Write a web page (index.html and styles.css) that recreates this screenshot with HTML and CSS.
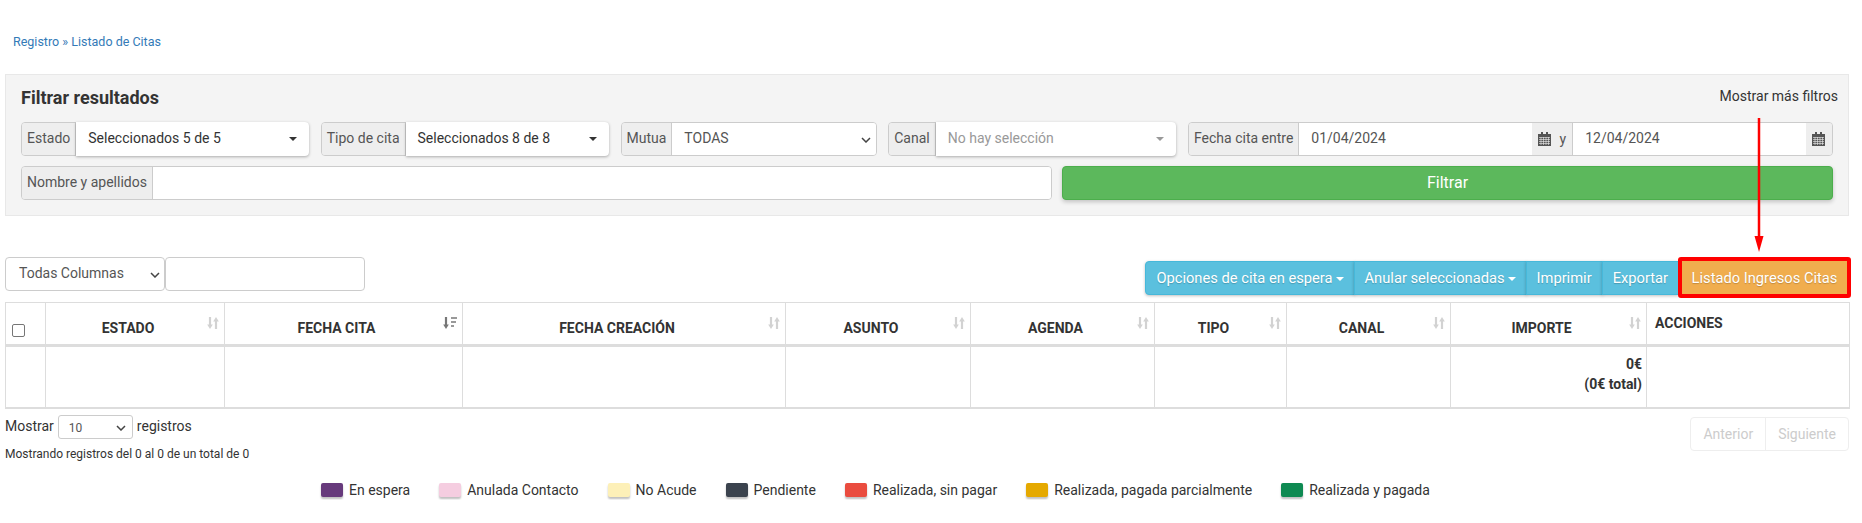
FILE: index.html
```html
<!DOCTYPE html>
<html lang="es">
<head>
    <meta charset="UTF-8">
    <title>Listado de Citas</title>
    <link rel="stylesheet" href="styles.css">
</head>
<body>
    <svg class="defs" width="0" height="0">
        <symbol id="sort-icon" viewBox="0 0 12 14">
            <path d="M3 1v8" stroke="currentColor" stroke-width="2.200"/>
            <path d="M.2 8.500h5.600L3 13z" fill="currentColor"/>
            <path d="M9 13V5" stroke="currentColor" stroke-width="2.200"/>
            <path d="M6.200 5.500h5.600L9 1z" fill="currentColor"/>
        </symbol>
        <symbol id="cal-icon" viewBox="0 0 13 14">
            <path d="M0 2h13v12H0z" fill="#555"/>
            <path d="M3 0h2v3H3zM8 0h2v3H8z" fill="#555"/>
            <path d="M1 5.500h11M1 7.500h11M1 9.500h11M1 11.500h11M3 5v8M5.500 5v8M8 5v8M10.500 5v8" stroke="#eee" stroke-width=".6" fill="none"/>
        </symbol>
        <symbol id="chevron-icon" viewBox="0 0 10 6">
            <path d="M1 1l4 4 4-4" fill="none" stroke="#444" stroke-width="1.500"/>
        </symbol>
    </svg>

    <div class="breadcrumb"><a>Registro</a> » <a>Listado de Citas</a></div>

    <section class="filter-panel">
        <div class="filter-head">
            <h3>Filtrar resultados</h3>
            <a class="more-filters">Mostrar más filtros</a>
        </div>
        <div class="filter-row">
            <div class="group w-estado">
                <span class="addon">Estado</span>
                <div class="fake-select raised">Seleccionados 5 de 5<i class="caret"></i></div>
            </div>
            <div class="group w-tipo">
                <span class="addon">Tipo de cita</span>
                <div class="fake-select raised">Seleccionados 8 de 8<i class="caret"></i></div>
            </div>
            <div class="group w-mutua">
                <span class="addon">Mutua</span>
                <div class="fake-select">TODAS
                    <svg class="chevron"><use href="#chevron-icon"/></svg>
                </div>
            </div>
            <div class="group w-canal">
                <span class="addon">Canal</span>
                <div class="fake-select raised muted">No hay selección<i class="caret"></i></div>
            </div>
            <div class="group w-fecha">
                <span class="addon">Fecha cita entre</span>
                <div class="fake-input">01/04/2024</div>
                <span class="addon addon-cal">
                    <svg class="cal"><use href="#cal-icon"/></svg>
                    <span>y</span>
                </span>
                <div class="fake-input">12/04/2024</div>
                <span class="addon addon-last">
                    <svg class="cal"><use href="#cal-icon"/></svg>
                </span>
            </div>
        </div>
        <div class="filter-row">
            <div class="group w-nombre">
                <span class="addon">Nombre y apellidos</span>
                <div class="fake-input square"></div>
            </div>
            <button class="btn-filtrar">Filtrar</button>
        </div>
    </section>

    <div class="toolbar">
        <div class="search">
            <div class="search-select">Todas Columnas
                <svg class="chevron"><use href="#chevron-icon"/></svg>
            </div>
            <div class="search-input"></div>
        </div>
        <div class="actions">
            <button class="btn-info first">Opciones de cita en espera<i class="caret white"></i></button>
            <button class="btn-info">Anular seleccionadas<i class="caret white"></i></button>
            <button class="btn-info">Imprimir</button>
            <button class="btn-info">Exportar</button>
            <button class="btn-warning">Listado Ingresos Citas</button>
        </div>
    </div>

    <table class="citas">
        <colgroup>
            <col class="c-check"><col class="c-estado"><col class="c-cita"><col class="c-creacion"><col class="c-asunto">
            <col class="c-agenda"><col class="c-tipo"><col class="c-canal"><col class="c-importe"><col class="c-acciones">
        </colgroup>
        <thead>
            <tr>
                <th class="check-cell"><span class="checkbox"></span></th>
                <th>ESTADO<svg class="sort"><use href="#sort-icon"/></svg></th>
                <th>FECHA CITA<svg class="sort-active" viewBox="0 0 14 14"><path d="M3 1v8" stroke="#777" stroke-width="2.200"/><path d="M.2 8.500h5.600L3 13z" fill="#777"/><path d="M8 1h6v2H8zM8 5h5v2H8zM8 9h3v2H8z" fill="#999"/></svg></th>
                <th>FECHA CREACIÓN<svg class="sort"><use href="#sort-icon"/></svg></th>
                <th>ASUNTO<svg class="sort"><use href="#sort-icon"/></svg></th>
                <th>AGENDA<svg class="sort"><use href="#sort-icon"/></svg></th>
                <th>TIPO<svg class="sort"><use href="#sort-icon"/></svg></th>
                <th>CANAL<svg class="sort"><use href="#sort-icon"/></svg></th>
                <th>IMPORTE<svg class="sort"><use href="#sort-icon"/></svg></th>
                <th class="th-acciones">ACCIONES</th>
            </tr>
        </thead>
        <tbody>
            <tr>
                <td></td><td></td><td></td><td></td><td></td><td></td><td></td><td></td>
                <td class="importe">0€<br>(0€ total)</td>
                <td></td>
            </tr>
        </tbody>
    </table>

    <div class="table-foot">
        <div class="foot-info">
            <div class="length">Mostrar
                <div class="length-select">10
                    <svg class="chevron"><use href="#chevron-icon"/></svg>
                </div>
                registros
            </div>
            <div class="count">Mostrando registros del 0 al 0 de un total de 0</div>
        </div>
        <div class="pager"><span>Anterior</span><span>Siguiente</span></div>
    </div>

    <ul class="legend">
        <li><i class="swatch s-espera"></i>En espera</li>
        <li><i class="swatch s-anulada"></i>Anulada Contacto</li>
        <li><i class="swatch s-noacude"></i>No Acude</li>
        <li><i class="swatch s-pendiente"></i>Pendiente</li>
        <li><i class="swatch s-sinpagar"></i>Realizada, sin pagar</li>
        <li><i class="swatch s-parcial"></i>Realizada, pagada parcialmente</li>
        <li><i class="swatch s-pagada"></i>Realizada y pagada</li>
    </ul>

    <!-- anotacion roja sobre la captura -->
    <svg class="annotation" viewBox="0 0 12 134">
        <path d="M6 0v120" stroke="#f00" stroke-width="2.500"/>
        <path d="M1.500 118h9L6 134z" fill="#f00"/>
    </svg>
</body>
</html>
```

FILE: styles.css
```css
* {
    margin: 0;
    padding: 0;
    box-sizing: border-box;
}

body {
    position: relative;
    background: #fff;
    color: #333;
    font-family: Roboto, 'Liberation Sans', sans-serif;
    font-size: 14px;
    line-height: 20px;
    padding: 0 13px 0 5px;
}

.defs {
    position: absolute;
}

.breadcrumb {
    height: 74px;
    padding: 32px 0 0 8px;
    font-size: 12.500px;
    color: #337ab7;
}

/* panel de filtros */
.filter-panel {
    height: 142px;
    background: #f4f4f4;
    border: 1px solid #e8e8e8;
    padding: 0 15px;
}

.filter-head {
    display: flex;
    justify-content: space-between;
    height: 47px;
    padding-top: 13px;
}

.filter-head h3 {
    font-size: 18px;
    font-weight: 700;
    line-height: 20px;
}

.more-filters {
    margin-top: -2px;
    margin-right: -5px;
    font-size: 14px;
}

.filter-row {
    display: flex;
    justify-content: space-between;
    height: 34px;
    margin-bottom: 10px;
}

.group {
    display: flex;
    height: 34px;
    border: 1px solid #ccc;
    border-radius: 4px;
    flex-shrink: 0;
}

.w-estado { width: 288px; }
.w-tipo { width: 288px; }
.w-mutua { width: 256px; }
.w-canal { width: 288px; }
.w-fecha { width: 645px; }
.w-nombre { width: 1031px; }

.addon {
    background: #eee;
    color: #555;
    padding: 5px;
    border-right: 1px solid #ccc;
    white-space: nowrap;
    flex-shrink: 0;
    border-radius: 3px 0 0 3px;
}

.addon-cal {
    display: flex;
    align-items: center;
    justify-content: space-between;
    width: 41px;
    border-radius: 0;
    padding: 0 6px;
}

.addon-last {
    display: flex;
    align-items: center;
    border-right: 0;
    width: 26px;
    padding: 0 6px;
    border-radius: 0 3px 3px 0;
}

.cal {
    width: 13px;
    height: 14px;
    flex-shrink: 0;
}

.fake-select,
.fake-input {
    position: relative;
    flex: 1;
    background: #fff;
    color: #555;
    padding: 5px 12px;
    white-space: nowrap;
}

.fake-select {
    border-radius: 0 3px 3px 0;
}

.raised {
    margin: -1px -1px -1px 0;
    padding-top: 6px;
    color: #333;
    box-shadow: 0 1px 3px rgba(0, 0, 0, .3);
    border-radius: 0 4px 4px 0;
}

.muted {
    color: #999;
}

.square {
    border-radius: 0 3px 3px 0;
}

.caret {
    position: absolute;
    right: 12px;
    top: 15px;
    border-top: 4px solid #333;
    border-left: 4px solid transparent;
    border-right: 4px solid transparent;
}

.muted .caret {
    border-top-color: #999;
}

.chevron {
    position: absolute;
    right: 5px;
    top: 14px;
    width: 10px;
    height: 6px;
}

.btn-filtrar {
    width: 771px;
    height: 34px;
    background: #5cb85c;
    border: 1px solid #4cae4c;
    border-radius: 4px;
    color: #fff;
    font: inherit;
    font-size: 16px;
    box-shadow: 0 2px 4px rgba(0, 0, 0, .2);
}

/* barra sobre la tabla */
.toolbar {
    display: flex;
    justify-content: space-between;
    align-items: flex-start;
    height: 45px;
    margin-top: 41px;
    margin-right: -2px;
}

.search {
    display: flex;
}

.search-select,
.search-input {
    position: relative;
    height: 34px;
    border: 1px solid #ccc;
    border-radius: 4px;
    color: #555;
}

.search-select {
    width: 160px;
    padding: 5px 13px;
}

.search-select .chevron {
    right: 4px;
}

.search-input {
    width: 200px;
}

.actions {
    display: flex;
    margin-top: 4px;
}

.actions button {
    font: inherit;
    font-size: 14.700px;
    color: #fff;
    height: 34px;
    padding: 0 10px;
    text-shadow: 0 1px 1px rgba(0, 0, 0, .2);
    white-space: nowrap;
}

.btn-info {
    position: relative;
    background: #5bc0de;
    border: 1px solid #46b8da;
    margin-left: -1px;
    box-shadow: 0 1px 3px rgba(0, 0, 0, .25);
}

.btn-info.first {
    border-radius: 4px 0 0 4px;
    margin-left: 0;
}

.caret.white {
    position: static;
    display: inline-block;
    vertical-align: middle;
    margin-left: 3px;
    border-top-color: #fff;
}

.btn-warning {
    position: relative;
    background: #f0ad4e;
    border: 4px solid #f00;
    border-radius: 3px;
    width: 173px;
    height: 41px !important;
    margin-top: -4px;
    margin-left: -1px;
    padding: 0 !important;
}

/* tabla */
.citas {
    width: 1844px;
    table-layout: fixed;
    border-collapse: collapse;
    border: 1px solid #ddd;
    border-bottom-width: 2px;
}

.c-check { width: 40px; }
.c-estado { width: 179px; }
.c-cita { width: 238px; }
.c-creacion { width: 323px; }
.c-asunto { width: 185px; }
.c-agenda { width: 184px; }
.c-tipo { width: 132px; }
.c-canal { width: 164px; }
.c-importe { width: 196px; }
.c-acciones { width: 203px; }

.citas th {
    position: relative;
    height: 43px;
    padding: 15px 22px 0 8px;
    border: 1px solid #ddd;
    border-bottom-width: 3px;
    font-size: 14px;
    line-height: 20px;
    font-weight: 700;
    text-align: center;
    vertical-align: top;
}

.citas th.th-acciones {
    text-align: left;
    padding-top: 10px;
}

.citas th.check-cell {
    padding: 0;
}

.checkbox {
    position: absolute;
    left: 6px;
    bottom: 7px;
    width: 13px;
    height: 13px;
    border: 1.500px solid #767676;
    border-radius: 2px;
    background: #fff;
}

.sort {
    position: absolute;
    right: 5px;
    top: 13px;
    width: 12px;
    height: 14px;
    color: #d2d2d2;
}

.sort-active {
    position: absolute;
    right: 5px;
    top: 13px;
    width: 14px;
    height: 14px;
}

.citas td {
    height: 62px;
    border: 1px solid #ddd;
    border-bottom: 0;
    padding: 8px 4px;
    vertical-align: top;
}

.citas td.importe {
    text-align: right;
    font-weight: 700;
    padding-top: 7px;
}

/* pie de tabla */
.table-foot {
    display: flex;
    justify-content: space-between;
    align-items: flex-start;
}

.length {
    display: flex;
    align-items: center;
    gap: 4px;
    margin-top: 4px;
    height: 26px;
}

.length-select {
    position: relative;
    width: 75px;
    height: 24px;
    margin-top: 2px;
    border: 1px solid #ccc;
    border-radius: 3px;
    font-size: 12px;
    line-height: 24px;
    padding-left: 10px;
    color: #555;
}

.length-select .chevron {
    top: 9px;
    right: 6px;
}

.count {
    margin-top: 6px;
    font-size: 12px;
    line-height: 18px;
}

.pager {
    display: flex;
    margin-top: 8px;
    border: 1px solid #eee;
    border-radius: 4px;
    height: 34px;
    color: #ccc;
}

.pager span {
    padding: 6px 12px;
}

.pager span + span {
    border-left: 1px solid #eee;
}

/* leyenda */
.legend {
    display: flex;
    gap: 29px;
    list-style: none;
    margin-top: 17px;
    padding-left: 316px;
}

.legend li {
    display: flex;
    align-items: center;
    gap: 6px;
    font-size: 14px;
}

.swatch {
    width: 22px;
    height: 14px;
    border-radius: 2px;
    box-shadow: 0 2px 2px rgba(0, 0, 0, .25);
}

.s-espera { background: #673a7c; }
.s-anulada { background: #f5cde0; }
.s-noacude { background: #fdf0b8; }
.s-pendiente { background: #3b434e; }
.s-sinpagar { background: #ea4c3f; }
.s-parcial { background: #e5a900; }
.s-pagada { background: #0e8a52; }

.annotation {
    position: absolute;
    left: 1753px;
    top: 118px;
    width: 12px;
    height: 134px;
}
```
